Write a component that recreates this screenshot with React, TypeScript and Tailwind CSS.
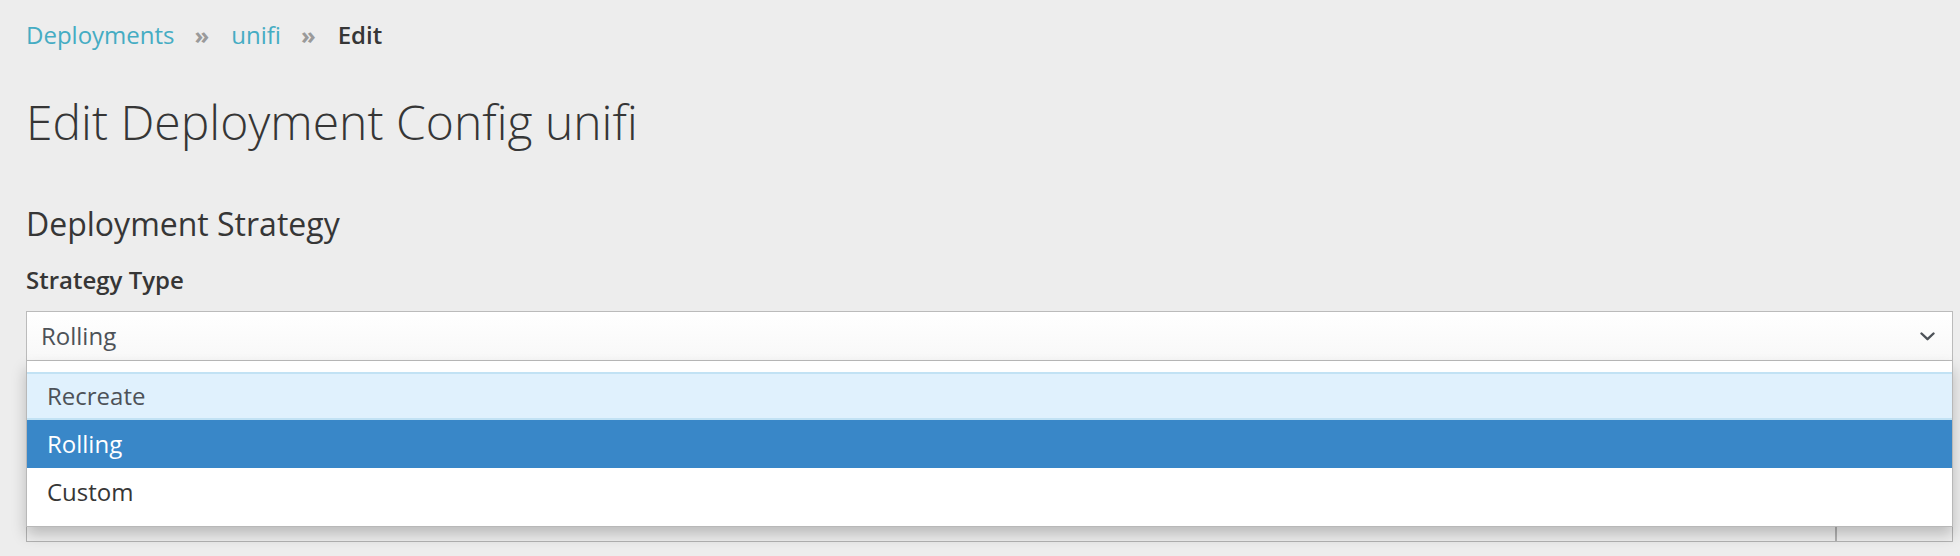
import React from "react";

const font = { fontFamily: '"Open Sans", "Noto Sans", sans-serif' };

function Chevron() {
  return (
    <svg width="15" height="9" viewBox="0 0 15 9" fill="none" className="text-[#4d5258]">
      <path d="M1.5 1.5 L7.5 7.2 L13.5 1.5" stroke="currentColor" strokeWidth="2.4" strokeLinecap="round" strokeLinejoin="round" />
    </svg>
  );
}

function Sep() {
  return <span className="mx-[20px] text-[24px] font-bold text-[#9a9a9a]">»</span>;
}

export default function App() {
  const options = [
    { label: "Recreate", state: "hover" },
    { label: "Rolling", state: "selected" },
    { label: "Custom", state: "none" },
  ];
  return (
    <div className="h-[556px] w-[1960px] overflow-hidden bg-[#ededed] text-[#363636]" style={font}>
      <div className="pl-[26px]">
        <div className="mt-[17px] flex h-[36px] items-center text-[24px] leading-[36px]">
          <a className="text-[#45acc3]">Deployments</a>
          <Sep />
          <a className="ml-[2px] text-[#45acc3]">unifi</a>
          <Sep />
          <span className="ml-[2px] font-semibold text-[#363636]">Edit</span>
        </div>
        <h1 className="mt-[42px] text-[48px] font-light leading-[53px] text-[#363636]">
          Edit Deployment Config unifi
        </h1>
        <h2 className="mt-[57px] text-[32px] leading-[38px] text-[#363636]">Deployment Strategy</h2>
        <label className="mt-[21px] block text-[24px] font-semibold leading-[32px] text-[#363636]">Strategy Type</label>
      </div>

      <div className="relative ml-[26px] mt-[15px] w-[1927px]">
        <div className="flex h-[50px] items-center justify-between border border-[#bbbbbb] bg-gradient-to-b from-white to-[#f8f8f8] pl-[14px] pr-[17px]">
          <span className="text-[24px] text-[#4d5258]">Rolling</span>
          <Chevron />
        </div>

        <div className="mt-[138px] flex h-[43px] border border-[#b3b3b3] bg-[#f0f0f0]">
          <div className="flex-1" />
          <div className="w-[117px] border-l-2 border-[#b3b3b3]" />
        </div>

        <div className="absolute left-0 right-0 top-[50px] border-x border-b border-[#b8b8b8] bg-white pt-[11px] pb-[10px] shadow-[0_8px_14px_rgba(0,0,0,0.22)]">
          {options.map((o) => (
            <div
              key={o.label}
              className={
                o.state === "hover"
                  ? "flex h-[48px] items-center border-y-2 border-[#c2e2f4] bg-[#e0f1fd] pl-[20px] text-[24px] text-[#4d5258]"
                  : o.state === "selected"
                  ? "flex h-[48px] items-center bg-[#3987c8] pl-[20px] text-[24px] text-white"
                  : "flex h-[48px] items-center pl-[20px] text-[24px] text-[#363636]"
              }
            >
              {o.label}
            </div>
          ))}
        </div>
      </div>
    </div>
  );
}
